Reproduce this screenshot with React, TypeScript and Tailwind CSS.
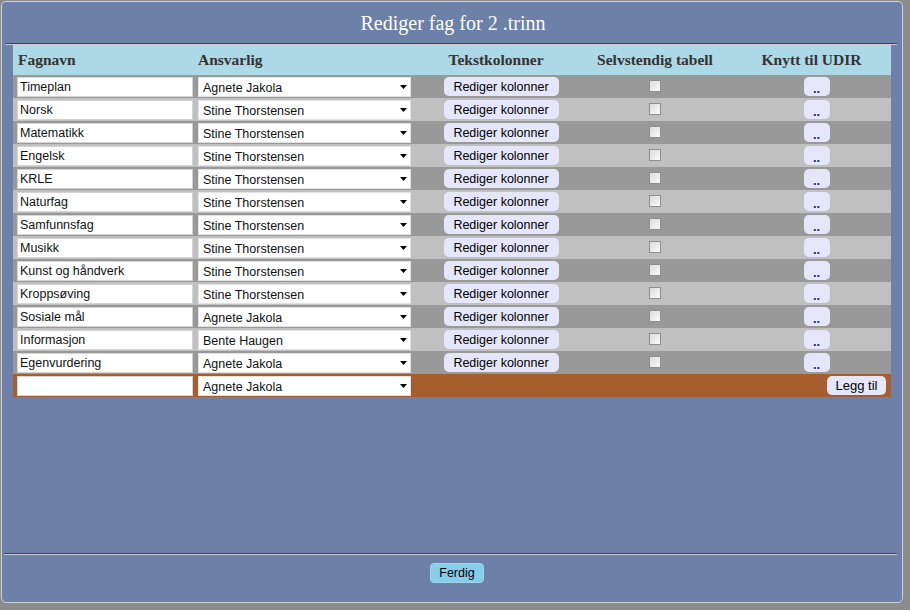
import { FC } from "react";

type Fag = {
    navn: string;
    ansvarlig: string;
};

const teachers = ["Agnete Jakola", "Stine Thorstensen", "Bente Haugen"];

const fagListe: Fag[] = [
    { navn: "Timeplan", ansvarlig: "Agnete Jakola" },
    { navn: "Norsk", ansvarlig: "Stine Thorstensen" },
    { navn: "Matematikk", ansvarlig: "Stine Thorstensen" },
    { navn: "Engelsk", ansvarlig: "Stine Thorstensen" },
    { navn: "KRLE", ansvarlig: "Stine Thorstensen" },
    { navn: "Naturfag", ansvarlig: "Stine Thorstensen" },
    { navn: "Samfunnsfag", ansvarlig: "Stine Thorstensen" },
    { navn: "Musikk", ansvarlig: "Stine Thorstensen" },
    { navn: "Kunst og håndverk", ansvarlig: "Stine Thorstensen" },
    { navn: "Kroppsøving", ansvarlig: "Stine Thorstensen" },
    { navn: "Sosiale mål", ansvarlig: "Agnete Jakola" },
    { navn: "Informasjon", ansvarlig: "Bente Haugen" },
    { navn: "Egenvurdering", ansvarlig: "Agnete Jakola" },
];

const sans = "font-['Liberation_Sans',Arial,sans-serif]";

const NameInput: FC<{ value: string }> = ({ value }) => (
    <input
        readOnly
        defaultValue={value}
        className={`block h-[20px] w-[176px] border border-[#d4d4d4] bg-white pl-[2px] pt-[1px] text-[12.5px] text-[#111] outline-none ${sans}`}
    />
);

const TeacherSelect: FC<{ value: string }> = ({ value }) => (
    <div className="relative h-[20px] w-[213px]">
        <select
            defaultValue={value}
            className={`block h-[20px] w-full appearance-none border border-[#e2e2e2] bg-white pl-[4px] pt-[1px] text-[12.5px] text-[#111] outline-none ${sans}`}
        >
            {teachers.map((t) => (
                <option key={t}>{t}</option>
            ))}
        </select>
        <svg
            className="pointer-events-none absolute right-[4px] top-[8px]"
            width="7"
            height="4"
            viewBox="0 0 7 4"
        >
            <path d="M0 0h7L3.5 4z" fill="#000" />
        </svg>
    </div>
);

const Checkbox: FC = () => (
    <span className="block h-[12px] w-[12px] border border-[#8e8e8e] bg-gradient-to-br from-[#dcdcdc] to-[#fafafa]" />
);

const LavenderButton: FC<{ label: string; className?: string }> = ({ label, className = "" }) => (
    <button
        className={`h-[19px] rounded-[5px] bg-[#e6e6fa] text-[12.5px] leading-[20px] ${sans} ${className}`}
    >
        {label}
    </button>
);

export default function App() {
    return (
        <div className="h-[610px] w-[910px] bg-[#8c8c8c] pl-[1px] pt-[1px]">
            <div className="flex h-[602px] w-[902px] flex-col rounded-[5px] border border-[#cfd3da] bg-[#6c80a8]">
                <div className="flex h-[41px] items-center justify-center pl-[2px] font-['Liberation_Serif','Times_New_Roman',serif] text-[20px] text-white">
                    Rediger fag for 2 .trinn
                </div>
                <hr className="ml-[4px] mr-[5px] border-0 border-t border-b border-t-[#3e4450] border-b-[#c9ccd2]" />

                <table className="ml-[11px] w-[878px] table-fixed border-collapse">
                    <colgroup>
                        <col className="w-[183px]" />
                        <col className="w-[218px]" />
                        <col className="w-[164px]" />
                        <col className="w-[154px]" />
                        <col className="w-[159px]" />
                    </colgroup>
                    <thead>
                        <tr className="h-[30px] bg-[#add8e6] font-['Liberation_Serif','Times_New_Roman',serif] text-[15.5px] font-bold text-[#333]">
                            <th className="pl-[5px] text-left">Fagnavn</th>
                            <th className="pl-[2px] text-left">Ansvarlig</th>
                            <th className="text-center">Tekstkolonner</th>
                            <th className="text-center">Selvstendig tabell</th>
                            <th className="text-center">Knytt til UDIR</th>
                        </tr>
                    </thead>
                    <tbody>
                        {fagListe.map((fag, i) => (
                            <tr
                                key={fag.navn}
                                className={`h-[23px] ${i % 2 === 0 ? "bg-[#999999]" : "bg-[#c0c0c0]"}`}
                            >
                                <td className="p-0 pl-[4px]">
                                    <NameInput value={fag.navn} />
                                </td>
                                <td className="p-0 pl-[2px]">
                                    <TeacherSelect value={fag.ansvarlig} />
                                </td>
                                <td className="p-0">
                                    <div className="flex justify-center pl-[10px]">
                                        <LavenderButton label="Rediger kolonner" className="w-[115px] text-black" />
                                    </div>
                                </td>
                                <td className="p-0">
                                    <div className="flex justify-center pb-[1px]">
                                        <Checkbox />
                                    </div>
                                </td>
                                <td className="p-0">
                                    <div className="flex justify-center pl-[10px]">
                                        <LavenderButton label=".." className="w-[26px] pt-[2px] text-[13px] font-bold text-[#1c2a6b]" />
                                    </div>
                                </td>
                            </tr>
                        ))}
                        <tr className="h-[23px] bg-[#a65e2e]">
                            <td className="p-0 pl-[4px]">
                                <NameInput value="" />
                            </td>
                            <td className="p-0 pl-[2px]">
                                <TeacherSelect value="Agnete Jakola" />
                            </td>
                            <td colSpan={3} className="p-0 pr-[5px]">
                                <div className="flex justify-end">
                                    <LavenderButton label="Legg til" className="w-[59px] text-[13px] text-black" />
                                </div>
                            </td>
                        </tr>
                    </tbody>
                </table>

                <div className="flex-1" />
                <hr className="ml-[2px] mr-[5px] border-0 border-t border-b border-t-[#3e4450] border-b-[#c9ccd2]" />
                <div className="flex h-[47px] justify-center pt-[8px]">
                    <button
                        className={`ml-[10px] h-[20px] w-[54px] rounded-[4px] border border-[#9fd6ee] bg-[#87ceeb] text-[12.5px] leading-[18px] text-black ${sans}`}
                    >
                        Ferdig
                    </button>
                </div>
            </div>
        </div>
    );
}
